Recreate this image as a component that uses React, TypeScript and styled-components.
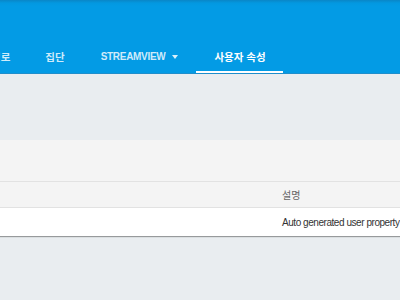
import React from 'react';
import styled, { createGlobalStyle } from 'styled-components';

const GlobalStyle = createGlobalStyle`
  html, body {
    margin: 0;
    padding: 0;
    background: #e9edf0;
    font-family: 'Liberation Sans', 'Noto Sans CJK KR', sans-serif;
  }
`;

type Tab = { label: string; active?: boolean; menu?: boolean };

const tabs: Tab[] = [
  { label: '경로' },
  { label: '집단' },
  { label: 'STREAMVIEW', menu: true },
  { label: '사용자 속성', active: true },
];

const App: React.FC = () => {
  return (
    <Page>
      <GlobalStyle />
      <Header>
        <TabBar>
          {tabs.map((t) => (
            <TabItem key={t.label} active={!!t.active} menu={!!t.menu}>
              <TabLabel latin={!!t.menu}>{t.label}</TabLabel>
              {t.menu && <Caret />}
            </TabItem>
          ))}
        </TabBar>
      </Header>
      <Content>
        <Panel>
          <Toolbar />
          <HeadRow>
            <Cell />
            <HeadCell>설명</HeadCell>
          </HeadRow>
          <BodyRow>
            <Cell />
            <BodyCell>Auto generated user property</BodyCell>
          </BodyRow>
        </Panel>
      </Content>
    </Page>
  );
};

const Page: any = styled.div`
  width: 400px;
  height: 300px;
  overflow: hidden;
  background: #e9edf0;
`;

const Header: any = styled.div`
  height: 73px;
  background: linear-gradient(#0a86c7 0px, #0398e0 3px, #039be5 6px, #039be5 100%);
  box-shadow: 0 1px 0 #1f8ecb;
  position: relative;
  display: flex;
  align-items: flex-end;
`;

const TabBar: any = styled.div`
  display: flex;
  height: 34px;
  margin-left: -27px;
`;

const TabItem: any = styled.div<{ active: boolean; menu: boolean }>`
  display: flex;
  align-items: center;
  padding: 3px ${(p: any) => (p.menu ? '18px' : '17px')} 0 ${(p: any) => (p.menu ? '19px' : '18px')};
  height: 100%;
  box-sizing: border-box;
  border-bottom: 2px solid ${(p: any) => (p.active ? '#ffffff' : 'transparent')};
  margin-bottom: -1px;
  color: ${(p: any) => (p.active ? '#ffffff' : 'rgba(255,255,255,0.82)')};
`;

const TabLabel: any = styled.span<{ latin: boolean }>`
  font-size: ${(p: any) => (p.latin ? '10px' : '10.5px')};
  font-weight: bold;
  letter-spacing: ${(p: any) => (p.latin ? '-0.3px' : '0')};
  white-space: nowrap;
`;

const Caret: any = styled.span`
  width: 0;
  height: 0;
  margin-left: 7px;
  border-left: 3.5px solid transparent;
  border-right: 3.5px solid transparent;
  border-top: 4px solid rgba(255, 255, 255, 0.85);
`;

const Content: any = styled.div`
  padding-top: 67px;
`;

const Panel: any = styled.div`
  background: #f4f4f4;
  box-shadow: 0 1px 1px rgba(0, 0, 0, 0.35);
`;

const Toolbar: any = styled.div`
  height: 41px;
  border-bottom: 1px solid #e2e2e2;
`;

const HeadRow: any = styled.div`
  display: flex;
  align-items: center;
  height: 25px;
  border-bottom: 1px solid #e2e2e2;
`;

const BodyRow: any = styled.div`
  display: flex;
  align-items: center;
  height: 28px;
  background: #ffffff;
`;

const Cell: any = styled.div`
  width: 282px;
  flex-shrink: 0;
`;

const HeadCell: any = styled.div`
  font-size: 10px;
  color: #666666;
  white-space: nowrap;
`;

const BodyCell: any = styled.div`
  font-size: 10px;
  letter-spacing: -0.45px;
  color: #333333;
  white-space: nowrap;
`;

export default App;
